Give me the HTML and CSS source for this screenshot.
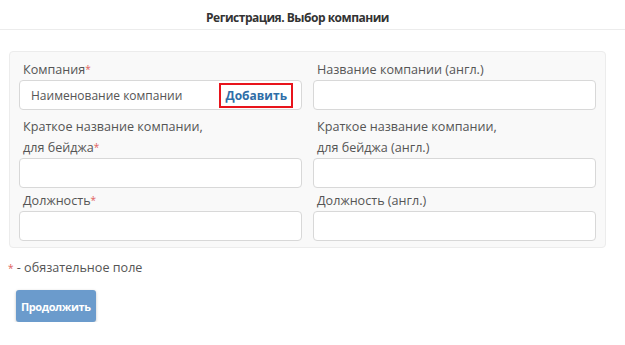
FILE: index.html
```html
<!DOCTYPE html>
<html lang="ru">
<head>
  <meta charset="UTF-8">
  <meta name="viewport" content="width=device-width, initial-scale=1.0">
  <title>Регистрация. Выбор компании</title>
  <link rel="stylesheet" href="styles.css">
</head>
<body>
  <div class="page">
    <h1 class="title">Регистрация. Выбор компании</h1>

    <div class="panel">
      <div class="field">
        <label>Компания<span class="req">*</span></label>
        <div class="input with-btn">
          <span class="value">Наименование компании</span>
          <button class="add">Добавить</button>
        </div>
      </div>
      <div class="field">
        <label>Название компании (англ.)</label>
        <div class="input"></div>
      </div>

      <div class="field">
        <label>Краткое название компании,<br>для бейджа<span class="req">*</span></label>
        <div class="input"></div>
      </div>
      <div class="field">
        <label>Краткое название компании,<br>для бейджа (англ.)</label>
        <div class="input"></div>
      </div>

      <div class="field last">
        <label>Должность<span class="req">*</span></label>
        <div class="input"></div>
      </div>
      <div class="field last">
        <label>Должность (англ.)</label>
        <div class="input"></div>
      </div>
    </div>

    <p class="note"><span class="req">*</span> - обязательное поле</p>

    <button class="next">Продолжить</button>
  </div>
</body>
</html>
```

FILE: styles.css
```css
body {
  margin: 0;
  background: #fff;
  color: #555;
  font-family: 'Open Sans', sans-serif;
  font-size: 12.6px;
}
.page {
  width: 606px;
}
.title {
  box-sizing: border-box;
  margin: 0;
  padding: 9px 30px 0 0;
  height: 30px;
  width: 625px;
  text-align: center;
  font-size: 12px;
  font-weight: bold;
  letter-spacing: -0.5px;
  color: #333;
  border-bottom: 1px solid #ececec;
}
.panel {
  margin: 21px 0 0 9px;
  padding: 1px 9px 6px;
  background: #f9f9f9;
  border: 1px solid #ececec;
  border-radius: 4px;
  display: grid;
  grid-template-columns: 1fr 1fr;
  column-gap: 11px;
}
.field label {
  display: block;
  margin: 6px 0 0 4px;
  line-height: 21px;
}
.field.last label {
  margin-top: 2px;
}
.req {
  color: #e0605c;
  font-size: 10px;
  vertical-align: top;
}
.input {
  height: 28px;
  background: #fff;
  border: 1px solid #d8d8d8;
  border-radius: 4px;
}
.with-btn {
  display: flex;
  align-items: center;
  justify-content: space-between;
  padding: 0 8px 0 11px;
}
.value {
  color: #555;
  font-size: 12px;
}
.add {
  padding: 2px 4px;
  background: #fff;
  border: 2px solid #e8141c;
  border-radius: 0;
  color: #2f6ea8;
  font-family: inherit;
  font-size: 12px;
  font-weight: bold;
}
.note {
  margin: 12px 0 0 8px;
  line-height: 16px;
}
.next {
  margin: 14px 0 0 16px;
  padding: 0 5px;
  height: 32px;
  background: #6b9bcc;
  border: none;
  border-radius: 3px;
  color: #fff;
  font-family: inherit;
  font-size: 11px;
  font-weight: bold;
  letter-spacing: -0.4px;
  box-shadow: 0 1px 3px rgba(0, 0, 0, 0.25);
}
```
